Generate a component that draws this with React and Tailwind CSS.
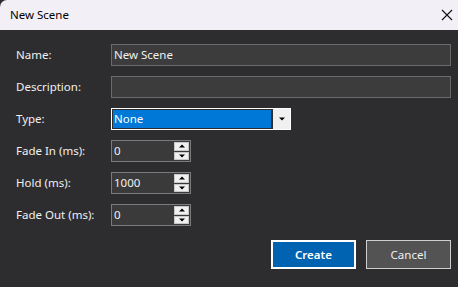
import React from "react";

const font = { fontFamily: '"Noto Sans", "Segoe UI", sans-serif' };

function Up() {
  return (
    <svg width="6" height="4" viewBox="0 0 6 4"><path d="M0 3.5 L3 0.5 L6 3.5 Z" fill="#000" /></svg>
  );
}
function Down() {
  return (
    <svg width="6" height="4" viewBox="0 0 6 4"><path d="M0 0.5 L6 0.5 L3 3.5 Z" fill="#000" /></svg>
  );
}

function Spin({ value }) {
  return (
    <div className="flex w-[80px] h-[22px] border border-[#7a7a7a] bg-[#3a3a3a]">
      <div className="flex-1 flex items-center pl-[2px] text-[11.5px] text-[#f0f0f0]">{value}</div>
      <div className="w-[17px] flex flex-col gap-[1px] p-[1px] bg-[#3a3a3a]">
        <div className="flex-1 bg-[#f0f0f0] border border-[#c8c8c8] flex items-center justify-center"><Up /></div>
        <div className="flex-1 bg-[#f0f0f0] border border-[#c8c8c8] flex items-center justify-center"><Down /></div>
      </div>
    </div>
  );
}

function Label({ children }) {
  return <div className="text-[11.5px] text-[#f0f0f0] leading-none">{children}</div>;
}

export default function App() {
  return (
    <div className="w-[458px] h-[287px] bg-[#2d2d30] flex flex-col overflow-hidden" style={font}>
      <div className="h-[30px] bg-[#f3eff6] rounded-tl-[7px] flex items-center justify-between pl-[10px] pr-[3px]">
        <span className="text-[11.5px] text-black">New Scene</span>
        <svg width="12" height="12" viewBox="0 0 12 12" className="mr-[2px]">
          <path d="M1 1 L11 11 M11 1 L1 11" stroke="#111" strokeWidth="1.1" />
        </svg>
      </div>
      <div className="flex-1 flex flex-col pl-[16px] pr-[7px] pt-[9px]">
        <div className="grid grid-cols-[95px_1fr] auto-rows-[32px] items-center">
          <Label>Name:</Label>
          <div className="h-[22px] border border-[#6b6b6b] bg-[#3c3c3c] flex items-center pl-[2px] text-[11.5px] text-[#f0f0f0]">New Scene</div>
          <Label>Description:</Label>
          <div className="h-[22px] border border-[#6b6b6b] bg-[#3c3c3c]"></div>
          <Label>Type:</Label>
          <div className="w-[180px] h-[22px] border border-white flex">
            <div className="flex-1 border border-[#2d2d30] bg-[#0078d7] flex items-center pl-[1px] text-[11.5px] text-white">None</div>
            <div className="w-[1px] bg-[#2d2d30]"></div>
            <div className="w-[17px] bg-[#f0f0f0] flex items-center justify-center"><Down /></div>
          </div>
          <Label>Fade In (ms):</Label>
          <Spin value="0" />
          <Label>Hold (ms):</Label>
          <Spin value="1000" />
          <Label>Fade Out (ms):</Label>
          <Spin value="0" />
        </div>
        <div className="flex justify-end gap-[10px] mt-[9px]">
          <div className="w-[85px] h-[29px] border-2 border-white bg-[#0063b1] flex items-center justify-center text-[11.5px] font-semibold text-white">Create</div>
          <div className="w-[85px] h-[29px] border border-[#cfcfcf] bg-[#535353] flex items-center justify-center text-[11.5px] text-[#f0f0f0]">Cancel</div>
        </div>
      </div>
    </div>
  );
}
